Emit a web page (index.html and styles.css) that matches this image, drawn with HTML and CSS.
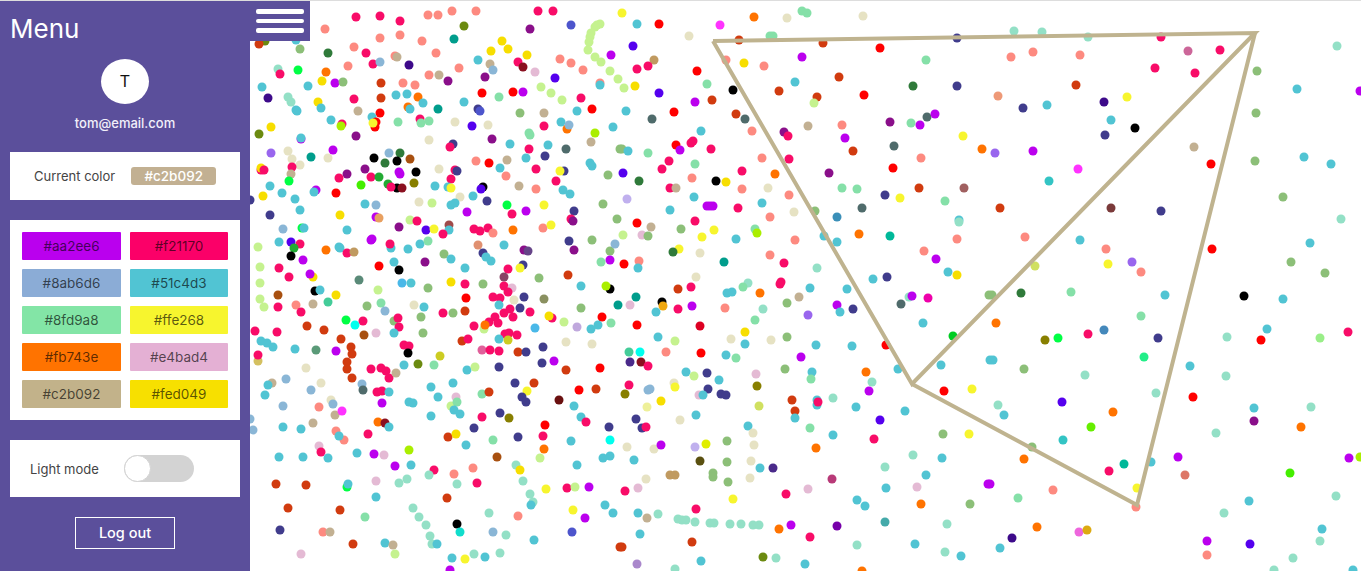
FILE: index.html
```html
<!DOCTYPE html>
<html>
<head>
    <meta charset="UTF-8">
    <title>Drawing board</title>
    <link rel="stylesheet" href="styles.css">
</head>
<body>
    <div class="app">
        <aside class="sidebar">
            <h1 class="menu-title">Menu</h1>
            <div class="user">
                <div class="avatar">T</div>
                <div class="email">tom@email.com</div>
            </div>

            <div class="card current-card">
                <span>Current color</span>
                <span class="current-chip">#c2b092</span>
            </div>

            <div class="card palette">
                <div class="swatch c1">#aa2ee6</div>
                <div class="swatch c2">#f21170</div>
                <div class="swatch c3">#8ab6d6</div>
                <div class="swatch c4">#51c4d3</div>
                <div class="swatch c5">#8fd9a8</div>
                <div class="swatch c6">#ffe268</div>
                <div class="swatch c7">#fb743e</div>
                <div class="swatch c8">#e4bad4</div>
                <div class="swatch c9">#c2b092</div>
                <div class="swatch c10">#fed049</div>
            </div>

            <div class="card mode-card">
                <span>Light mode</span>
                <div class="toggle"><div class="knob"></div></div>
            </div>

            <button type="button" class="logout">Log out</button>
        </aside>

        <main class="board">
            <button type="button" class="hamburger" aria-label="Toggle menu">
                <span></span>
                <span></span>
                <span></span>
            </button>
            <canvas id="board" width="1111" height="570"></canvas>
        </main>
    </div>

    <script src="board.js"></script>
</body>
</html>
```

FILE: styles.css
```css
body {
    margin: 0;
    border-top: 1px solid #ddd;
    font-family: "Inter", "Open Sans", sans-serif;
    background-color: white;
    overflow: hidden;
}

.app {
    display: flex;
    height: 570px;
}

.sidebar {
    width: 250px;
    flex-shrink: 0;
    box-sizing: border-box;
    padding: 0 10px;
    background-color: #5b4f9b;
    color: white;
}

.menu-title {
    margin: 0;
    padding-top: 13px;
    font-size: 26px;
    line-height: 30px;
    font-weight: 400;
}

.user {
    margin-top: 15px;
    text-align: center;
}

.avatar {
    width: 48px;
    height: 45px;
    margin: 0 auto;
    border-radius: 50%;
    background-color: white;
    color: #111;
    font-family: "Liberation Sans", sans-serif;
    font-size: 16px;
    line-height: 45px;
}

.email {
    margin-top: 10px;
    font-size: 13px;
    line-height: 18px;
    font-weight: 500;
    color: #f2effa;
}

.card {
    background-color: white;
    color: #444;
    font-size: 13px;
}

.current-card {
    display: flex;
    align-items: center;
    height: 48px;
    margin-top: 20px;
    padding-left: 24px;
    gap: 16px;
}

.current-chip {
    width: 85px;
    height: 18px;
    border-radius: 3px;
    background-color: #c2b092;
    color: white;
    font-size: 13.5px;
    font-weight: 500;
    line-height: 18px;
    text-align: center;
}

.palette {
    display: grid;
    grid-template-columns: 99px 98px;
    grid-auto-rows: 28px;
    gap: 9px;
    margin-top: 20px;
    padding: 12px;
}

.swatch {
    border-radius: 1px;
    color: rgba(0, 0, 0, 0.65);
    font-size: 13.5px;
    line-height: 28px;
    text-align: center;
}

.c1 { background-color: #ba00ee; }
.c2 { background-color: #fb0068; }
.c3 { background-color: #8bacd6; }
.c4 { background-color: #51c4d3; }
.c5 { background-color: #83e5a6; }
.c6 { background-color: #f7f52e; }
.c7 { background-color: #ff7300; }
.c8 { background-color: #e4b0d4; }
.c9 { background-color: #c2b28a; }
.c10 { background-color: #f7e000; }

.mode-card {
    display: flex;
    align-items: center;
    height: 57px;
    margin-top: 20px;
    padding-left: 20px;
    gap: 25px;
}

.toggle {
    width: 70px;
    height: 27px;
    border-radius: 14px;
    background-color: #d3d3d3;
}

.knob {
    width: 25px;
    height: 25px;
    border: 1px solid #d3d3d3;
    border-radius: 50%;
    background-color: white;
}

.logout {
    display: block;
    width: 100px;
    height: 32px;
    margin: 20px auto 0;
    padding: 0 0 2px;
    border: 1px solid white;
    background: none;
    color: white;
    font-family: inherit;
    font-size: 14.5px;
    font-weight: 500;
    cursor: pointer;
}

.board {
    position: relative;
    flex: 1;
}

.board canvas {
    display: block;
}

.hamburger {
    position: absolute;
    left: 0;
    top: 0;
    display: flex;
    flex-direction: column;
    gap: 5px;
    width: 60px;
    height: 40px;
    padding: 8px 6px;
    box-sizing: border-box;
    border: none;
    background-color: #5b4f9b;
    cursor: pointer;
}

.hamburger span {
    display: block;
    width: 48px;
    height: 5px;
    border-radius: 2px;
    background-color: white;
}
```

FILE: board.js
```js
// colour keys used in the dot list below
const colors = {
    p: '#f80c68', c: '#51c4d3', s: '#fd8a80', r: '#ff0000', o: '#d13b0f', O: '#ff7300',
    y: '#f7de00', l: '#f7f52e', v: '#bb00ee', i: '#5500ee', n: '#403c8c', E: '#3d0a8a',
    m: '#93e0c6', g: '#85e0a8', G: '#8cbf78', L: '#c5f28f', b: '#e6e2c3', t: '#c2b092',
    k: '#000000', e: '#00ff44', T: '#009d8c', a: '#e4bad4', w: '#8ab6d6', d: '#8a0f8a',
    D: '#2f7a3a', M: '#ff33ff', u: '#9966ee', f: '#6b8a10', x: '#8a1020', h: '#4d55cc',
    j: '#4f6b6b', q: '#4ab8e8', A: '#aaee00', B: '#a85010', C: '#887f00',
    sa: '#e09070', br: '#a04a4a', pg: '#664488', sl: '#5a8a78', mg: '#884466', gy: '#8a9060',
    cb: '#00ffee', yo: '#cccc22', gg: '#5a9a78', pk: '#e0609a', tl: '#d4c060', ll: '#c0a8dd',
    ng: '#22aa33', or: '#e8a060', tg: '#00b899', dr: '#6a1010', ct: '#11ddcc', mp: '#ee00aa',
    dc: '#3a8fb8', gn: '#00cc22', np: '#4a2a8a', rd: '#dd0022', ly: '#eef099', gl: '#d0e060',
    ul: '#c0b0ee', ey: '#e0ee00', dol: '#5a5010', dm: '#b83a78', tb: '#c09a60', ga: '#44aaaa',
    dp: '#7700aa', um: '#aa88cc', dk: '#a06060', dv: '#cc6699', tc: '#33c4c4', bn: '#7a3a3a',
    hb: '#4488bb', lg: '#99ee88', tk: '#22ee88', sr: '#dd7766', lm: '#66ee00', ln: '#44ee00',
    mm: '#ee66dd', au: '#ddaa11', sg: '#ee9977', fg: '#f0a810', gb: '#44cc99'
};

const dots = `
p356,17 p380,16 p400,21 s428,15 s438,15 s452,11 s476,11 p538,11 p553,11 l622,13 f464,26 s325,29 d530,29 h571,25
s400,35 s380,38 s422,41 T454,39 f265,41 o259,44 c296,40 G300,49 s354,47 D328,53 p366,53 s436,53 s395,56 t397,57
p373,64 w380,62 y502,41 y491,51 y508,49 y527,55 p518,62 x523,67 c478,60 t490,64 w493,70 s348,66 E409,65 s459,68
s560,59 s571,63 s583,70 a535,72 v611,55 L600,24 L597,25 L595,27 L591,33 L590,37 L589,42 L588,50 L595,57 L601,62
L610,71 L618,79 m278,69 p280,74 e298,70 O326,72 y322,81 v335,83 G343,82 o381,83 s403,83 s415,85 s429,75 t439,75
d448,81 d485,77 i555,78 s600,83 c600,85 c262,87 c308,86 L541,87 L551,93 L562,100 E268,98 m288,97 m291,102 y318,102
p354,99 o381,98 c407,94 c396,95 O418,97 c423,103 r482,93 r513,92 v523,92 g499,97 p581,98 c464,102 c321,108 c296,110
c297,111 t358,111 r380,113 O408,107 c410,109 T438,109 n478,109 h480,111 G520,113 t544,113 c577,111 r592,109 c372,117
c331,120 r376,122 r375,127 l373,123 p342,124 A341,126 p420,119 g421,123 g429,121 g398,122 b455,122 i472,126 b488,125
p544,126 c561,122 O567,129 w569,125 c613,127 f259,134 y271,127 d356,136 v301,139 c301,138 A595,133 g529,133 g530,135
b429,140 d492,139 t591,142 c510,144 p529,149 c548,145 j566,149 G620,149 n453,144 p450,147 u271,153 b288,151 b292,159
b300,165 v333,150 T311,157 b328,158 k374,158 w389,153 D400,153 B410,159 k397,161 D385,163 s476,161 r489,163 n545,156
c526,158 t507,160 c590,163 c592,166 c500,168 p292,167 p261,170 y261,168 p264,170 t291,174 d365,169 v399,172 v400,174
k416,172 b439,169 p455,170 n457,171 p536,169 n564,171 l560,171 G608,175 s506,176 d347,174 p339,178 p371,177 ng379,177
p451,179 p556,181 e289,181 C414,183 ln361,185 c270,186 ng388,184 k397,188 x402,188 p391,187 c435,186 c448,187 l451,188
k483,187 i481,189 t519,186 v316,190 c314,192 s536,189 c563,190 c570,194

y263,196 c282,193 c295,199 r336,193 n250,200 c300,210 n270,215 y340,215 c365,204 w376,205 b419,202 L432,203 b460,197
c473,196 n487,201 e507,205 l544,205 G603,204 c451,205 c455,203 v467,212 p512,214 v526,211 n574,211 v376,217 or379,218
L410,220 p417,221 d399,227 c347,230 w283,229 e302,228 c304,228 i426,230 l434,229 br449,225 c449,230 p443,234 p474,229
p480,231 p488,228 s493,233 O513,230 s543,228 l551,225 p571,219 d573,221 G617,219 c279,242 i291,242 p300,244 ng294,248
k291,256 L258,247 O326,250 c339,247 c340,248 p347,253 tb354,252 v372,239 v371,240 c391,248 p390,244 c408,249 c420,244
g428,241 G444,254 c451,259 sa478,245 c504,245 n483,253 c486,257 c491,261 d524,250 pg528,251 n569,241 G592,240 d574,250
G610,251 w615,244 v303,260 c394,262 d425,262 g601,262 v610,260 p279,268 r379,266 k399,270 L260,267 c465,268 n523,265
p508,269 l520,268 p289,277 y313,277 v310,274 sl359,280 mg504,277 G539,278 o568,275 L260,283 q402,283 c411,283 y451,282
p465,284 G483,284 G428,288 p504,286 a512,288 c581,286 k610,289 A606,286 k315,291 c320,290 p508,292 L378,290 B278,295
y336,295 L260,299 r466,298 p493,297 p500,298 n524,297 b514,300 gy544,299 gb328,302 g381,303 L264,307 p278,307 s296,305
t313,304 G367,306 b414,305 c424,307 c499,305 p301,312 w385,311 p443,313 G453,313 o465,311 p510,309 n520,308 p530,312
p504,313 p513,317 G581,308 T618,305 p495,317 p489,322 p498,323 p552,318 y549,316 r602,317 e346,320 cb355,325 p363,321
G394,321 p398,318 p399,327 G421,317 o307,326 o324,330 p255,331 p277,332 p474,326 L484,329 O485,325 q535,328 L564,322
ll577,327 c591,329 c598,325 g611,323 c394,333 G423,333 o341,339 B364,335 a376,333 p505,334 p509,333 p517,335 c499,339
yo508,340 o462,341 p468,339 c261,341 c267,343 c273,347 c295,349 gg316,350 v336,351 o351,347 o352,354 p404,345 p409,346
k408,353 pk482,350 p490,350 p499,351 o518,352 n526,352 n543,347 b566,342 b592,344 tl258,361 p258,355 yo440,356 f418,364
g434,365 c404,365 o347,362 o347,369 p371,369 p381,368 p386,371 p389,378 t396,373 b306,368 c467,370 L475,367 n499,367
n542,363 v554,361 o566,370 r600,368 o352,378 w286,379

t272,383 c268,385 c265,395 b321,383 w311,390 w283,406 s319,407 b331,400 w333,404 t335,415 M342,411 w362,384 j363,390
p377,392 p382,391 c389,392 v382,403 c431,387 c453,383 c438,397 L451,406 a456,397 g457,402 c454,410 c460,414 c409,402
c413,403 c431,416 g482,394 o489,392 n515,383 o534,383 l527,391 n522,397 n526,402 dr559,400 r579,390 o596,389 c574,406
c581,417 p586,422 p482,417 n500,413 C509,418 r545,425 n609,427 c283,427 c301,429 t313,423 w253,430 w250,419 s336,431
s344,440 c339,436 O378,422 x385,423 c389,427 p368,434 n474,428 o448,437 y456,434 c466,445 g493,440 n518,437 p543,436
O544,449 c571,441 cb610,440 a319,446 p321,452 c279,457 c303,457 c328,458 c357,453 v374,454 a384,455 A409,450 v395,466
c411,465 p434,470 B497,457 s473,468 s454,474 m429,475 m516,465 y520,470 L540,458 c577,465 c603,458 c610,456 o276,484
o306,485 e347,487 c348,484 a376,481 m399,483 m407,479 m457,484 p477,483 m523,481 c376,497 o447,498 l546,489 p567,488
L575,487 v589,487 m530,494 m533,502 c531,505 o288,508 o340,510 m413,508 m419,517 m426,525 m430,536 g365,517 m489,513
s518,516 l573,510 v585,518 c605,505 c613,513 n280,530 s323,532 t330,532 k457,524 ct460,532 w493,532 m506,535 h572,532
c534,540 o353,544 c385,543 t393,545 L395,554 m432,544 c437,544 a301,554 o620,547 c452,558 l465,559 m474,554 c485,557
m500,553 v450,570

c637,24 r659,24 M720,25 O754,17 b787,18 g802,11 g807,13 b863,16 b689,36 o739,40 g770,36 g773,36 o823,43 r880,48 n957,38
i633,46 tb654,60 p637,69 p648,66 r697,71 s726,60 y744,63 s764,66 v802,57 g926,60 g707,84 k733,90 L624,88 y635,86 i659,93
v695,102 o712,100 o779,91 c795,82 o839,77 o817,97 L814,103 r864,95 D913,86 n957,86 c626,111 r674,112 j652,119 o736,114
j745,119 s752,131 d784,132 p788,136 t808,126 s842,125 v845,138 d890,122 g911,123 j927,117 v935,114 v920,125 l963,136
O982,149 c701,131 r676,145 v680,150 p691,143 p693,141 p711,149 G622,149 c628,151 g648,153 o853,151 j894,146 p669,161
p662,169 g695,164 s762,158 p789,159 s921,158 r893,168 i623,173 p742,171 O775,174 d829,173 D639,181 s692,178 k716,181
y726,182 p670,188 t676,188 s742,189 b768,188 g842,188 g857,189 o919,188 dk964,188

ul627,199 c694,197 v707,206 v710,206 v713,206 p738,208 c762,203 s789,195 n885,195 l900,198 g945,201 c670,210 j862,208
s770,217 b794,212 G815,211 dc837,217 c959,220 m959,222 r637,223 t651,227 p695,221 G681,229 l714,230 l702,237 L623,235
a642,235 G648,236 g755,229 A757,233 c736,239 s795,240 c824,236 c837,242 O859,234 tg890,236 s957,239 l679,249 D673,252
b700,253 s924,251 v936,259 r624,264 s639,261 c638,268 T724,262 s770,255 p784,263 m817,268 c948,272 y957,275 b696,277
c873,279 n887,277 o678,289 p691,287 m748,283 g743,287 p781,282 p780,284 c727,293 c732,292 O760,293 c810,288 t799,297
c847,289 T636,297 a630,305 k662,302 fg663,306 p678,309 v692,306 s725,308 G787,303 m763,309 v837,305 c840,312 n853,309
m909,297 v912,296 mp928,298 j901,304 G989,295 c656,312 u808,315 g755,320 r637,325 rd700,326 c923,323 y745,332 c658,337
L675,341 b731,339 b771,340 G787,337 c745,344 gn953,336 c816,345 c852,346 r886,345 gb629,352 cb640,352 s666,352 r701,353
c726,355 g736,358 v801,357 np630,362 x641,362 p648,366 c686,372 L694,376 n707,373 a756,374 G785,369 c812,372 O866,372
c898,369 c941,365 c990,360 c719,380 g811,379 m872,382

p629,385 C625,394 w648,390 w650,389 b674,383 l675,387 n708,389 a699,395 c703,395 n721,394 n726,395 C757,386 y661,401
ly647,407 gl759,406 o792,400 o795,411 c817,405 c817,400 p818,402 m833,398 v869,391 r944,391 l972,389 c856,407 c905,411
i880,420 n636,419 n642,428 p646,427 c696,415 b680,420 c795,418 c748,426 b753,433 g810,428 c833,435 p874,439 G943,434
l969,434 b627,447 b654,449 v661,445 ul695,447 ey706,444 G727,441 b754,445 O816,448 c634,460 dol700,461 G727,462 b751,461
c760,468 np773,468 m913,455 c942,458 m885,467 c926,475 tb670,475 tb675,475 G713,473 G713,477 b646,479 b750,478 dm832,479
G728,482 v988,484 p625,491 a638,488 p786,494 a808,489 c886,488 a917,487 l733,499 c857,500 c865,506 O921,504 G970,504
p696,509 c638,513 t647,518 m658,514 m678,519 m682,520 m686,520 m695,522 m710,523 m714,523 m730,524 m741,524 m753,525
m759,525 ga885,522 m947,524 O779,529 v791,525 dp837,526 p810,537 c640,534 o692,542 o622,547 m857,545 c915,544 m945,552
c961,556 f763,557 m776,558 c701,561 um637,564 c805,564 m675,569 O862,571

m1014,31 m1042,32 m1088,37 p1161,37 s1011,57 s1033,52 s1080,55 dv1188,51 p1220,50 p1155,68 p1195,73 m1337,46 G1257,71
G1256,113 G1255,161 c1297,89 v1360,91 o1076,85 sg998,96 n1023,108 c1047,105 E1104,102 l1127,97 c1111,120 k1135,128
n1105,135 t1194,147 r1211,164 c1304,157 c1331,164 u995,153 v1033,151 M1078,169 tc1049,181

G1283,197 m1341,219 o1000,208 bn1111,208 n1161,211 c1310,243 s1025,237 c1080,240 s1106,249 r1212,249 gl1035,266 l1108,264
u1132,262 s1141,272 G1291,262 G1325,273 G992,295 D1021,293 g1071,292 c1165,295 k1244,296 c1283,299 O996,323 g1141,316
hb1104,330 p1088,334 e1058,338 C1045,340 n1158,338 m1227,337 c1267,329 r1261,340 lg1320,338 p1348,332 c993,360 tk1144,357
G1024,369 m1085,375 c1190,366 m1226,376

m1156,393 r1193,397 m998,405 c1004,415 i1062,402 O1113,412 c1254,408 d1254,421 m1311,407 O1301,427 m1216,433 lm1091,427
tc1063,440 G1032,447 O1024,459 v1178,457 c1151,462 tg1124,464 p1109,471 sr1185,475 v1349,458 A1360,457 ln1290,473 v990,484
s1053,490 g1018,498 l1137,488 s1136,507 m1336,496 c1249,501 m1224,513 O1037,527 E1012,538 c1000,548 mm1079,532 au1087,530
c1322,529 m1320,541 v1207,541 i1250,544 s1207,555 m1293,558 m1274,570 c1353,570
`;

const triangle = [[713, 41], [1255, 33], [912, 384], [713, 41]];
const tail = [[912, 384], [1137, 505], [1255, 33]];

const ctx = document.getElementById('board').getContext('2d');
ctx.translate(-250, -1);

for (const [, key, x, y] of dots.matchAll(/([a-zA-Z]+)(\d+),(\d+)/g)) {
    ctx.fillStyle = colors[key];
    ctx.beginPath();
    ctx.arc(Number(x), Number(y), 4.5, 0, Math.PI * 2);
    ctx.fill();
}

function stroke(points) {
    ctx.beginPath();
    points.forEach(([x, y], i) => (i ? ctx.lineTo(x, y) : ctx.moveTo(x, y)));
    ctx.stroke();
}

ctx.strokeStyle = '#bfb38f';
ctx.lineWidth = 4;
stroke(triangle);
stroke(tail);
```
